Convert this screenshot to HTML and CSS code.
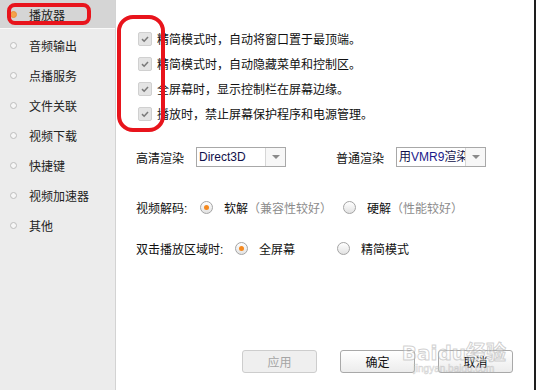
FILE: index.html
```html
<!DOCTYPE html>
<html lang="zh-CN">
<head>
<meta charset="utf-8">
<title>播放器设置</title>
<link rel="stylesheet" href="styles.css">
</head>
<body>
<div class="window">
  <aside class="sidebar">
    <ul class="nav">
      <li class="nav-item is-active"><span class="dot"></span>播放器</li>
      <li class="nav-item"><span class="dot"></span>音频输出</li>
      <li class="nav-item"><span class="dot"></span>点播服务</li>
      <li class="nav-item"><span class="dot"></span>文件关联</li>
      <li class="nav-item"><span class="dot"></span>视频下载</li>
      <li class="nav-item"><span class="dot"></span>快捷键</li>
      <li class="nav-item"><span class="dot"></span>视频加速器</li>
      <li class="nav-item"><span class="dot"></span>其他</li>
    </ul>
  </aside>
  <main class="main">
    <ul class="checks">
      <li class="check-row"><span class="checkbox"><svg viewBox="0 0 14 14" width="14" height="14"><path d="M3.5 7.2 L6 9.6 L10.5 4.6" fill="none" stroke="#7a7a7a" stroke-width="1.8"/></svg></span>精简模式时，自动将窗口置于最顶端。</li>
      <li class="check-row"><span class="checkbox"><svg viewBox="0 0 14 14" width="14" height="14"><path d="M3.5 7.2 L6 9.6 L10.5 4.6" fill="none" stroke="#7a7a7a" stroke-width="1.8"/></svg></span>精简模式时，自动隐藏菜单和控制区。</li>
      <li class="check-row"><span class="checkbox"><svg viewBox="0 0 14 14" width="14" height="14"><path d="M3.5 7.2 L6 9.6 L10.5 4.6" fill="none" stroke="#7a7a7a" stroke-width="1.8"/></svg></span>全屏幕时，显示控制栏在屏幕边缘。</li>
      <li class="check-row"><span class="checkbox"><svg viewBox="0 0 14 14" width="14" height="14"><path d="M3.5 7.2 L6 9.6 L10.5 4.6" fill="none" stroke="#7a7a7a" stroke-width="1.8"/></svg></span>播放时，禁止屏幕保护程序和电源管理。</li>
    </ul>

    <div class="render-row">
      <span class="field-label">高清渲染</span>
      <span class="select"><span class="select-text">Direct3D</span><span class="select-btn"><span class="tri"></span></span></span>
      <span class="field-label second">普通渲染</span>
      <span class="select"><span class="select-text">用<span class="latin">VMR9</span>渲染器</span><span class="select-btn"><span class="tri"></span></span></span>
    </div>

    <div class="radio-row decode">
      <span class="row-label">视频解码:</span>
      <span class="option opt-a"><span class="radio is-on"></span><span class="opt-text">软解<span class="hint">（兼容性较好）</span></span></span>
      <span class="option"><span class="radio"></span><span class="opt-text">硬解<span class="hint">（性能较好）</span></span></span>
    </div>

    <div class="radio-row dbl">
      <span class="row-label">双击播放区域时:</span>
      <span class="option opt-b"><span class="radio is-on"></span><span class="opt-text">全屏幕</span></span>
      <span class="option"><span class="radio"></span><span class="opt-text">精简模式</span></span>
    </div>

    <div class="buttons">
      <span class="btn is-disabled">应用</span>
      <span class="btn">确定</span>
      <span class="btn">取消</span>
    </div>

    <div class="watermark"><span class="wm-big">Baidu经验</span><span class="wm-small">jingyan.baidu.com</span></div>
  </main>
</div>
<div class="mark mark-nav"></div>
<div class="mark mark-checks"></div>
</body>
</html>
```

FILE: styles.css
```css
* { box-sizing: border-box; }
html, body { margin: 0; padding: 0; }
body {
  width: 536px;
  height: 390px;
  overflow: hidden;
  font-family: "Liberation Sans", "Noto Sans CJK SC", sans-serif;
  font-size: 12px;
  color: #1a1a1a;
  position: relative;
}
.window {
  display: flex;
  width: 536px;
  height: 390px;
  border-right: 2px solid #1e1e1e;
  background: #fff;
}
.sidebar {
  width: 116px;
  flex: none;
  background: #ececec;
  border-right: 1px solid #d3d3d3;
}
.nav { list-style: none; margin: 0; padding: 0; }
.nav-item {
  display: flex;
  align-items: center;
  height: 30px;
  padding-left: 10px;
  color: #222;
}
.nav-item.is-active {
  height: 29px;
  background: #d5d5d5;
  border-bottom: 1px solid #fafafa;
  margin-bottom: 1px;
}
.dot {
  width: 7px;
  height: 7px;
  border-radius: 50%;
  border: 1px solid #bdbdbd;
  background: #f6f6f6;
  margin-right: 12px;
  flex: none;
}
.is-active .dot { background: #f4a24a; border-color: #e8923a; }

.main {
  flex: 1;
  display: flex;
  flex-direction: column;
  padding: 26px 21px 17px 20px;
  position: relative;
}
.checks { list-style: none; margin: 0 0 0 2px; padding: 0; }
.check-row {
  display: flex;
  align-items: center;
  height: 25px;
  color: #111;
}
.checkbox {
  width: 14px;
  height: 14px;
  flex: none;
  background: #e4e4e4;
  border: 1px solid #d0d0d0;
  border-radius: 2px;
  margin-right: 5px;
  display: flex;
  align-items: center;
  justify-content: center;
}
.checkbox svg { display: block; width: 12px; height: 12px; }

.render-row {
  display: flex;
  align-items: center;
  height: 20px;
  margin-top: 21px;
}
.field-label { width: 60px; flex: none; color: #111; }
.field-label.second { margin-left: 50px; }
.select {
  display: flex;
  width: 90px;
  height: 20px;
  border: 1px solid #a8a8a8;
  background: #fff;
  flex: none;
}
.select-text {
  flex: 1;
  overflow: hidden;
  white-space: nowrap;
  padding-left: 2px;
  line-height: 18px;
  color: #10104a;
}
.latin { color: #1a1a8a; }
.select-btn {
  width: 20px;
  flex: none;
  border-left: 1px solid #d6d6d6;
  background: #f7f7f7;
  display: flex;
  align-items: center;
  justify-content: center;
}
.tri {
  width: 0; height: 0;
  border-left: 4px solid transparent;
  border-right: 4px solid transparent;
  border-top: 4px solid #8a8a8a;
}

.radio-row {
  display: flex;
  align-items: center;
  height: 16px;
  color: #111;
}
.radio-row.decode { margin-top: 32px; }
.radio-row.dbl { margin-top: 25px; }
.row-label { margin-right: 11px; flex: none; }
.decode .row-label { width: 53px; }
.dbl .row-label { width: 88px; }
.option { display: flex; align-items: center; flex: none; }
.opt-a { width: 143px; }
.opt-b { width: 102px; }
.radio {
  width: 13px;
  height: 13px;
  border-radius: 50%;
  border: 1px solid #a4a4a4;
  background: linear-gradient(#ffffff, #e2e2e2);
  margin-right: 11px;
  flex: none;
  display: flex;
  align-items: center;
  justify-content: center;
}
.radio.is-on::after {
  content: "";
  width: 5px;
  height: 5px;
  border-radius: 50%;
  background: #f5891f;
}
.hint { color: #8c8c8c; }

.buttons {
  margin-top: auto;
  display: flex;
  justify-content: flex-end;
  gap: 23px;
}
.btn {
  width: 75px;
  height: 23px;
  display: flex;
  align-items: center;
  justify-content: center;
  border: 1px solid #a9a9a9;
  border-radius: 3px;
  background: linear-gradient(#ffffff, #ececec);
  color: #111;
}
.btn.is-disabled {
  border-color: #cdcdcd;
  background: #efefef;
  color: #a5a5a5;
}

.watermark {
  position: absolute;
  right: 28px;
  bottom: 16px;
  display: flex;
  flex-direction: column;
  align-items: center;
  pointer-events: none;
}
.wm-big {
  font-family: "DejaVu Sans", "Noto Sans CJK SC", sans-serif;
  font-size: 20px;
  font-weight: bold;
  line-height: 22px;
  color: rgba(255, 255, 255, 0.35);
  -webkit-text-stroke: 1px rgba(170, 170, 170, 0.55);
}
.wm-small {
  font-size: 10px;
  line-height: 10px;
  color: rgba(255, 255, 255, 0.3);
  -webkit-text-stroke: 0.6px rgba(170, 170, 170, 0.5);
}

.mark {
  position: absolute;
  border: 4px solid #e8141c;
  pointer-events: none;
}
.mark-nav {
  left: 7px;
  top: 3px;
  width: 84px;
  height: 22px;
  border-radius: 8px;
}
.mark-checks {
  left: 117px;
  top: 15px;
  width: 48px;
  height: 117px;
  border-radius: 16px;
}
```
